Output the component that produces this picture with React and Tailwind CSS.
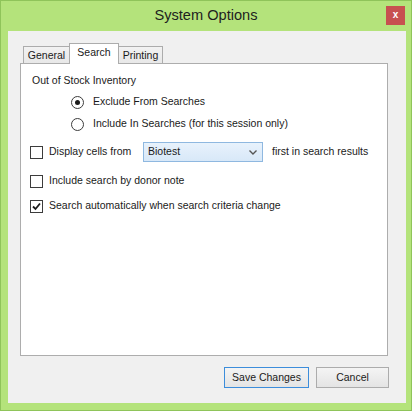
export default function App() {
  const Radio = ({ checked }) => (
    <div className="w-[13px] h-[13px] rounded-full border border-[#3c3c3c] bg-white flex items-center justify-center shrink-0">
      {checked && <div className="w-[5px] h-[5px] rounded-full bg-[#1a1a1a]" />}
    </div>
  );
  const Check = ({ checked }) => (
    <div className="w-[13px] h-[13px] border border-[#3c3c3c] bg-white flex items-center justify-center shrink-0">
      {checked && (
        <svg width="9" height="9" viewBox="0 0 9 9">
          <path d="M1 4.5 L3.5 7 L8 1.5" fill="none" stroke="#1a1a1a" strokeWidth="1.8" />
        </svg>
      )}
    </div>
  );
  return (
    <div className="w-[414px] h-[412px] bg-white overflow-hidden font-['Liberation_Sans',Arial,sans-serif] text-[10.5px] text-[#1a1a1a]">
      <div className="w-[412px] h-[411px] border border-[#8fc45a] bg-[#b4e37b] flex flex-col">
        <div className="h-[30px] relative flex items-center justify-center text-[14.6px] text-[#1e1e1e]">
          <span>System Options</span>
          <div className="absolute right-[6px] top-[5px] w-[19px] h-[19px] bg-[#c75050] flex items-center justify-center text-white text-[10px] font-bold leading-none pb-[2px]">
            x
          </div>
        </div>
        <div className="ml-[7px] w-[398px] h-[372px] bg-[#f0f0f0] flex flex-col pt-[12px] pl-[12px]">
          <div className="flex h-[20px] items-end pl-[3px] relative z-10">
            <div className="w-[47px] h-[17px] border border-b-0 border-[#acacac] bg-gradient-to-b from-[#f2f2f2] to-[#e8e8e8] flex items-center justify-center pt-[1px]">
              General
            </div>
            <div className="-ml-px w-[50px] h-[21px] -mb-px border border-b-0 border-[#acacac] bg-white flex items-center justify-center pb-[2px] relative z-10">
              Search
            </div>
            <div className="-ml-px w-[45px] h-[17px] border border-b-0 border-[#acacac] bg-gradient-to-b from-[#f2f2f2] to-[#e8e8e8] flex items-center justify-center pt-[1px]">
              Printing
            </div>
          </div>
          <div className="w-[368px] h-[293px] border border-[#adadad] bg-white flex flex-col pl-[11px] pt-[9px]">
            <div className="h-[16px] flex items-center">Out of Stock Inventory</div>
            <div className="h-[20px] mt-[3px] flex items-center gap-[9px] ml-[39px]">
              <Radio checked />
              <span>Exclude From Searches</span>
            </div>
            <div className="h-[20px] mt-[2px] flex items-center gap-[9px] ml-[39px]">
              <Radio />
              <span>Include In Searches (for this session only)</span>
            </div>
            <div className="h-[20px] mt-[8px] flex items-center -ml-[2px]">
              <Check />
              <span className="ml-[6px] w-[94px]">Display cells from</span>
              <div className="w-[120px] h-[20px] border border-[#8fb8e0] bg-gradient-to-b from-[#e8f2fc] to-[#d8e8f8] flex items-center justify-between pl-[4px] pr-[5px]">
                <span>Biotest</span>
                <svg width="8" height="5" viewBox="0 0 8 5">
                  <path d="M0.5 0.5 L4 4 L7.5 0.5" fill="none" stroke="#555" strokeWidth="1.4" />
                </svg>
              </div>
              <span className="ml-[9px]">first in search results</span>
            </div>
            <div className="h-[20px] mt-[9px] flex items-center -ml-[2px] gap-[6px]">
              <Check />
              <span>Include search by donor note</span>
            </div>
            <div className="h-[20px] mt-[5px] flex items-center -ml-[2px] gap-[6px]">
              <Check checked />
              <span>Search automatically when search criteria change</span>
            </div>
          </div>
          <div className="flex justify-end gap-[7px] mt-[11px] pr-[17px]">
            <div className="w-[85px] h-[21px] border border-[#3c8ddb] bg-gradient-to-b from-[#f4f4f4] to-[#e4e4e4] flex items-center justify-center">
              Save Changes
            </div>
            <div className="w-[73px] h-[21px] border border-[#acacac] bg-gradient-to-b from-[#f4f4f4] to-[#e4e4e4] flex items-center justify-center">
              Cancel
            </div>
          </div>
        </div>
      </div>
    </div>
  );
}
